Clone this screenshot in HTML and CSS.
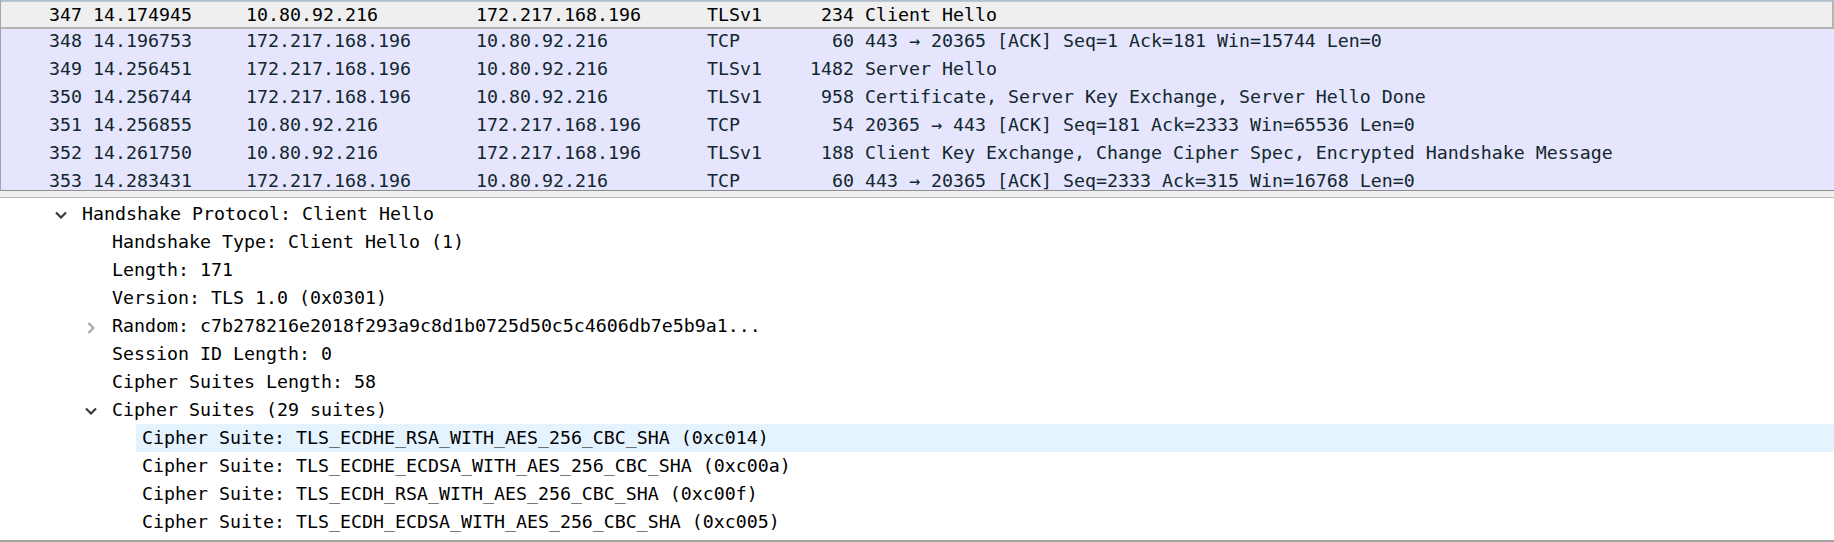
FILE: index.html
```html
<!DOCTYPE html>
<html>
<head>
<meta charset="utf-8">
<title>Packets</title>
<link rel="stylesheet" href="styles.css">
</head>
<body>
<div class="packet-list">
  <div class="prow selected"><span class="c-no">347</span><span class="c-time">14.174945</span><span class="c-src">10.80.92.216</span><span class="c-dst">172.217.168.196</span><span class="c-proto">TLSv1</span><span class="c-len">234</span><span class="c-info">Client Hello</span></div>
  <div class="prow tcp"><span class="c-no">348</span><span class="c-time">14.196753</span><span class="c-src">172.217.168.196</span><span class="c-dst">10.80.92.216</span><span class="c-proto">TCP</span><span class="c-len">60</span><span class="c-info">443 → 20365 [ACK] Seq=1 Ack=181 Win=15744 Len=0</span></div>
  <div class="prow tcp"><span class="c-no">349</span><span class="c-time">14.256451</span><span class="c-src">172.217.168.196</span><span class="c-dst">10.80.92.216</span><span class="c-proto">TLSv1</span><span class="c-len">1482</span><span class="c-info">Server Hello</span></div>
  <div class="prow tcp"><span class="c-no">350</span><span class="c-time">14.256744</span><span class="c-src">172.217.168.196</span><span class="c-dst">10.80.92.216</span><span class="c-proto">TLSv1</span><span class="c-len">958</span><span class="c-info">Certificate, Server Key Exchange, Server Hello Done</span></div>
  <div class="prow tcp"><span class="c-no">351</span><span class="c-time">14.256855</span><span class="c-src">10.80.92.216</span><span class="c-dst">172.217.168.196</span><span class="c-proto">TCP</span><span class="c-len">54</span><span class="c-info">20365 → 443 [ACK] Seq=181 Ack=2333 Win=65536 Len=0</span></div>
  <div class="prow tcp"><span class="c-no">352</span><span class="c-time">14.261750</span><span class="c-src">10.80.92.216</span><span class="c-dst">172.217.168.196</span><span class="c-proto">TLSv1</span><span class="c-len">188</span><span class="c-info">Client Key Exchange, Change Cipher Spec, Encrypted Handshake Message</span></div>
  <div class="prow tcp"><span class="c-no">353</span><span class="c-time">14.283431</span><span class="c-src">172.217.168.196</span><span class="c-dst">10.80.92.216</span><span class="c-proto">TCP</span><span class="c-len">60</span><span class="c-info">443 → 20365 [ACK] Seq=2333 Ack=315 Win=16768 Len=0</span></div>
</div>
<div class="splitter"></div>
<div class="details">
  <div class="trow l1"><span class="exp"><svg class="chev-down" width="12" height="8" viewBox="0 0 12 8"><polyline points="1,1.5 6,6.5 11,1.5" fill="none" stroke="#3a3a3a" stroke-width="2.2"/></svg></span><span class="item">Handshake Protocol: Client Hello</span></div>
  <div class="trow l2"><span class="exp"></span><span class="item">Handshake Type: Client Hello (1)</span></div>
  <div class="trow l2"><span class="exp"></span><span class="item">Length: 171</span></div>
  <div class="trow l2"><span class="exp"></span><span class="item">Version: TLS 1.0 (0x0301)</span></div>
  <div class="trow l2"><span class="exp"><svg class="chev-right" width="8" height="12" viewBox="0 0 8 12"><polyline points="1.5,1 6.5,6 1.5,11" fill="none" stroke="#a6a6a6" stroke-width="2.2"/></svg></span><span class="item">Random: c7b278216e2018f293a9c8d1b0725d50c5c4606db7e5b9a1...</span></div>
  <div class="trow l2"><span class="exp"></span><span class="item">Session ID Length: 0</span></div>
  <div class="trow l2"><span class="exp"></span><span class="item">Cipher Suites Length: 58</span></div>
  <div class="trow l2"><span class="exp"><svg class="chev-down" width="12" height="8" viewBox="0 0 12 8"><polyline points="1,1.5 6,6.5 11,1.5" fill="none" stroke="#3a3a3a" stroke-width="2.2"/></svg></span><span class="item">Cipher Suites (29 suites)</span></div>
  <div class="trow l3"><span class="exp"></span><span class="item hover">Cipher Suite: TLS_ECDHE_RSA_WITH_AES_256_CBC_SHA (0xc014)</span></div>
  <div class="trow l3"><span class="exp"></span><span class="item">Cipher Suite: TLS_ECDHE_ECDSA_WITH_AES_256_CBC_SHA (0xc00a)</span></div>
  <div class="trow l3"><span class="exp"></span><span class="item">Cipher Suite: TLS_ECDH_RSA_WITH_AES_256_CBC_SHA (0xc00f)</span></div>
  <div class="trow l3"><span class="exp"></span><span class="item">Cipher Suite: TLS_ECDH_ECDSA_WITH_AES_256_CBC_SHA (0xc005)</span></div>
</div>
</body>
</html>
```
FILE: styles.css
```css
html, body {
  margin: 0;
  padding: 0;
  background: #ffffff;
}
body {
  width: 1834px;
  height: 542px;
  overflow: hidden;
  font-family: "DejaVu Sans Mono", "Liberation Mono", monospace;
  font-size: 18.27px;
  color: #000;
}

.packet-list {
  height: 189px;
  overflow: hidden;
  border-top: 1px solid #aabdd5;
  border-left: 1px solid #a4a4a4;
  border-bottom: 1px solid #8e8e8e;
  background: #e5e5fd;
}
.prow {
  display: flex;
  height: 28px;
  line-height: 28px;
  white-space: pre;
  color: #12272e;
}
.prow.selected {
  position: relative;
  z-index: 1;
  height: 25px;
  line-height: 25px;
  background: #efefef;
  border-top: 1px solid #c6c6c6;
  border-right: 2px solid #b4b4b4;
  box-shadow: 0 2px 0 #b4b4b4;
  color: #000;
}
.c-no { width: 81px; text-align: right; }
.c-time { width: 153px; margin-left: 11px; }
.c-src { width: 230px; }
.c-dst { width: 231px; }
.c-proto { width: 88px; }
.c-len { width: 59px; text-align: right; }
.c-info { margin-left: 11px; flex: 1; }

.splitter {
  height: 6px;
  background: #f0f0f0;
  border-bottom: 1px solid #bdbdbd;
}

.details {
  height: 340px;
  padding-top: 2px;
  border-bottom: 2px solid #a3a3a3;
  overflow: hidden;
}
.trow {
  display: flex;
  height: 28px;
  line-height: 28px;
  white-space: pre;
}
.l1 { padding-left: 54px; }
.l2 { padding-left: 84px; }
.l3 { padding-left: 114px; }
.exp {
  width: 22px;
  display: flex;
  align-items: center;
}
.chev-down { margin-left: 1px; margin-top: 2px; }
.chev-right { margin-left: 3px; margin-top: 3px; }
.item {
  flex: 1;
  padding-left: 6px;
}
.item.hover {
  background: #e5f3ff;
}
```
